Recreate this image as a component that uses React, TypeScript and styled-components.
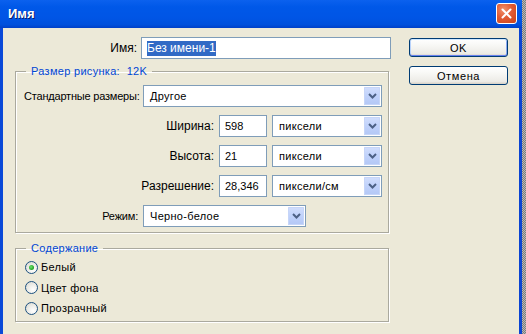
import React from "react";
import styled, { createGlobalStyle } from "styled-components";

const GlobalStyle = createGlobalStyle`
  html, body {
    margin: 0;
    padding: 0;
    width: 526px;
    height: 334px;
    overflow: hidden;
    background: repeating-conic-gradient(#7c7c7c 0 25%, #b8b8b8 0 50%) 0 0 / 2px 2px;
  }
  * { box-sizing: border-box; }
`;

const Window = styled.div`
  width: 522px;
  height: 334px;
  display: flex;
  flex-direction: column;
  font-family: "Liberation Sans", Arial, sans-serif;
  color: #000;
`;

const TitleBar = styled.div`
  height: 28px;
  flex: none;
  display: flex;
  align-items: center;
  justify-content: space-between;
  padding: 0 5px 1px 8px;
  background: linear-gradient(180deg, #0b61ee 0%, #0058e8 25%, #0055e5 65%, #0050dc 88%, #0040c8 100%);
  color: #fff;
  font-weight: bold;
  font-size: 13px;
  text-shadow: 1px 1px 0 #0a1e6e;
`;

const CloseButton = styled.div`
  width: 21px;
  height: 21px;
  border: 1px solid #fff;
  border-radius: 3px;
  background: radial-gradient(circle at 35% 30%, #f1926e 0%, #e15b34 45%, #c94219 100%);
  display: flex;
  align-items: center;
  justify-content: center;
`;

const Body = styled.div`
  flex: 1;
  display: flex;
  align-items: flex-start;
  background: #ece9d8;
  border-left: 3px solid #0a49d8;
  border-right: 3px solid #0a44d2;
  padding: 9px 0 0 12px;
`;

const Main = styled.div`
  width: 376px;
  display: flex;
  flex-direction: column;
`;

const NameRow = styled.div`
  display: flex;
  align-items: center;
  gap: 4px;
  height: 22px;
`;

const BigLabel = styled.label<{ $width: number }>`
  width: ${(p) => p.$width}px;
  flex: none;
  text-align: right;
  font-size: 12px;
`;

const SmallLabel = styled.label<{ $width: number; $align?: string }>`
  width: ${(p) => p.$width}px;
  flex: none;
  text-align: ${(p) => p.$align || "right"};
  white-space: nowrap;
  font-size: 11px;
  letter-spacing: -0.2px;
`;

const TextField = styled.div<{ $width: number }>`
  width: ${(p) => p.$width}px;
  height: 22px;
  flex: none;
  display: flex;
  align-items: center;
  padding-left: 5px;
  background: #fff;
  border: 1px solid #7f9db9;
  font-size: 11px;
`;

const Selected = styled.span`
  background: #316ac5;
  color: #fff;
  font-size: 12px;
  line-height: 15px;
`;

const Group = styled.fieldset<{ $top: number }>`
  margin: ${(p) => p.$top}px 0 0 0;
  padding: 0;
  width: 374px;
  border: 1px solid #aaa99e;
  box-shadow: inset 1px 1px 0 #fff, 1px 1px 0 #fff;
  min-width: 0;
`;

const Legend = styled.legend`
  margin-left: 10px;
  padding: 0 5px;
  color: #0046d5;
  font-size: 11px;
  line-height: 13px;
  letter-spacing: 0.3px;
`;

const GroupInner = styled.div<{ $pad: string; $gap: number }>`
  padding: ${(p) => p.$pad};
  display: flex;
  flex-direction: column;
  gap: ${(p) => p.$gap}px;
`;

const FieldRow = styled.div`
  display: flex;
  align-items: center;
  gap: 5px;
  height: 22px;
`;

const Combo = styled.div<{ $width: number }>`
  width: ${(p) => p.$width}px;
  height: 22px;
  flex: none;
  display: flex;
  align-items: center;
  justify-content: space-between;
  padding: 1px 1px 1px 6px;
  background: #fff;
  border: 1px solid #7f9db9;
  font-size: 11px;
  letter-spacing: 0.3px;
`;

const ComboArrow = styled.div`
  width: 16px;
  height: 100%;
  flex: none;
  display: flex;
  align-items: center;
  justify-content: center;
  border-radius: 1px;
  background: linear-gradient(180deg, #d2defc 0%, #c0d2fb 50%, #b3c7f5 100%);
  box-shadow: inset 0 0 0 1px #c6d5f8;
`;

const RadioRow = styled.label`
  display: flex;
  align-items: center;
  gap: 3px;
  height: 20.5px;
  font-size: 11px;
  letter-spacing: 0.3px;
`;

const RadioDot = styled.span<{ $checked?: boolean }>`
  width: 13px;
  height: 13px;
  border-radius: 50%;
  border: 1px solid #1c5180;
  background: radial-gradient(circle at 65% 70%, #fff 0%, #e8e8e2 60%, #d2d1c8 100%);
  display: flex;
  align-items: center;
  justify-content: center;
  &::after {
    content: "";
    display: ${(p) => (p.$checked ? "block" : "none")};
    width: 5px;
    height: 5px;
    border-radius: 50%;
    background: radial-gradient(circle at 40% 40%, #6ee36e 0%, #21a121 70%);
  }
`;

const ButtonCol = styled.div`
  margin: 1px 0 0 18px;
  width: 99px;
  display: flex;
  flex-direction: column;
  gap: 9px;
`;

const XpButton = styled.div<{ $default?: boolean }>`
  height: 19px;
  display: flex;
  align-items: center;
  justify-content: center;
  border: 1px solid #003c74;
  border-radius: 3px;
  background: linear-gradient(180deg, #ffffff 0%, #f7f7f4 40%, #ecebe6 85%, #d6d0c5 100%);
  font-size: 11px;
  letter-spacing: 0.6px;
  box-shadow: ${(p) =>
    p.$default ? "inset 0 1px 0 #cee7ff, inset 0 -1px 0 #6982ee, inset 1px 0 0 #b8d2fb, inset -1px 0 0 #8aa8f3" : "none"};
`;

const Chevron = () => (
  <svg width="9" height="6" viewBox="0 0 9 6">
    <polyline points="1,1 4.5,4.5 8,1" fill="none" stroke="#4d6185" strokeWidth="2" />
  </svg>
);

const CloseX = () => (
  <svg width="11" height="11" viewBox="0 0 11 11">
    <path d="M1.5 1.5 L9.5 9.5 M9.5 1.5 L1.5 9.5" stroke="#fff" strokeWidth="2" strokeLinecap="round" />
  </svg>
);

const Select = ({ width, value }: { width: number; value: string }) => (
  <Combo $width={width}>
    <span>{value}</span>
    <ComboArrow>
      <Chevron />
    </ComboArrow>
  </Combo>
);

export default function App() {
  return (
    <>
      <GlobalStyle />
      <Window>
        <TitleBar>
          <span>Имя</span>
          <CloseButton>
            <CloseX />
          </CloseButton>
        </TitleBar>
        <Body>
          <Main>
            <NameRow>
              <BigLabel $width={122}>Имя:</BigLabel>
              <TextField $width={250}>
                <Selected>Без имени-1</Selected>
              </TextField>
            </NameRow>

            <Group $top={6}>
              <Legend>Размер рисунка:&nbsp; 12K</Legend>
              <GroupInner $pad="7px 0 5px 8px" $gap={8}>
                <FieldRow>
                  <SmallLabel $width={114} $align="left">
                    Стандартные размеры:
                  </SmallLabel>
                  <Select width={239} value="Другое" />
                </FieldRow>
                <FieldRow>
                  <BigLabel $width={190}>Ширина:</BigLabel>
                  <TextField $width={48}>598</TextField>
                  <Select width={110} value="пиксели" />
                </FieldRow>
                <FieldRow>
                  <BigLabel $width={190}>Высота:</BigLabel>
                  <TextField $width={48}>21</TextField>
                  <Select width={110} value="пиксели" />
                </FieldRow>
                <FieldRow>
                  <BigLabel $width={190}>Разрешение:</BigLabel>
                  <TextField $width={48}>28,346</TextField>
                  <Select width={110} value="пиксели/см" />
                </FieldRow>
                <FieldRow>
                  <SmallLabel $width={114}>Режим:</SmallLabel>
                  <Select width={163} value="Черно-белое" />
                </FieldRow>
              </GroupInner>
            </Group>

            <Group $top={9}>
              <Legend>Содержание</Legend>
              <GroupInner $pad="2px 0 2px 9px" $gap={0}>
                <RadioRow>
                  <RadioDot $checked />
                  Белый
                </RadioRow>
                <RadioRow>
                  <RadioDot />
                  Цвет фона
                </RadioRow>
                <RadioRow>
                  <RadioDot />
                  Прозрачный
                </RadioRow>
              </GroupInner>
            </Group>
          </Main>

          <ButtonCol>
            <XpButton $default>OK</XpButton>
            <XpButton>Отмена</XpButton>
          </ButtonCol>
        </Body>
      </Window>
    </>
  );
}
